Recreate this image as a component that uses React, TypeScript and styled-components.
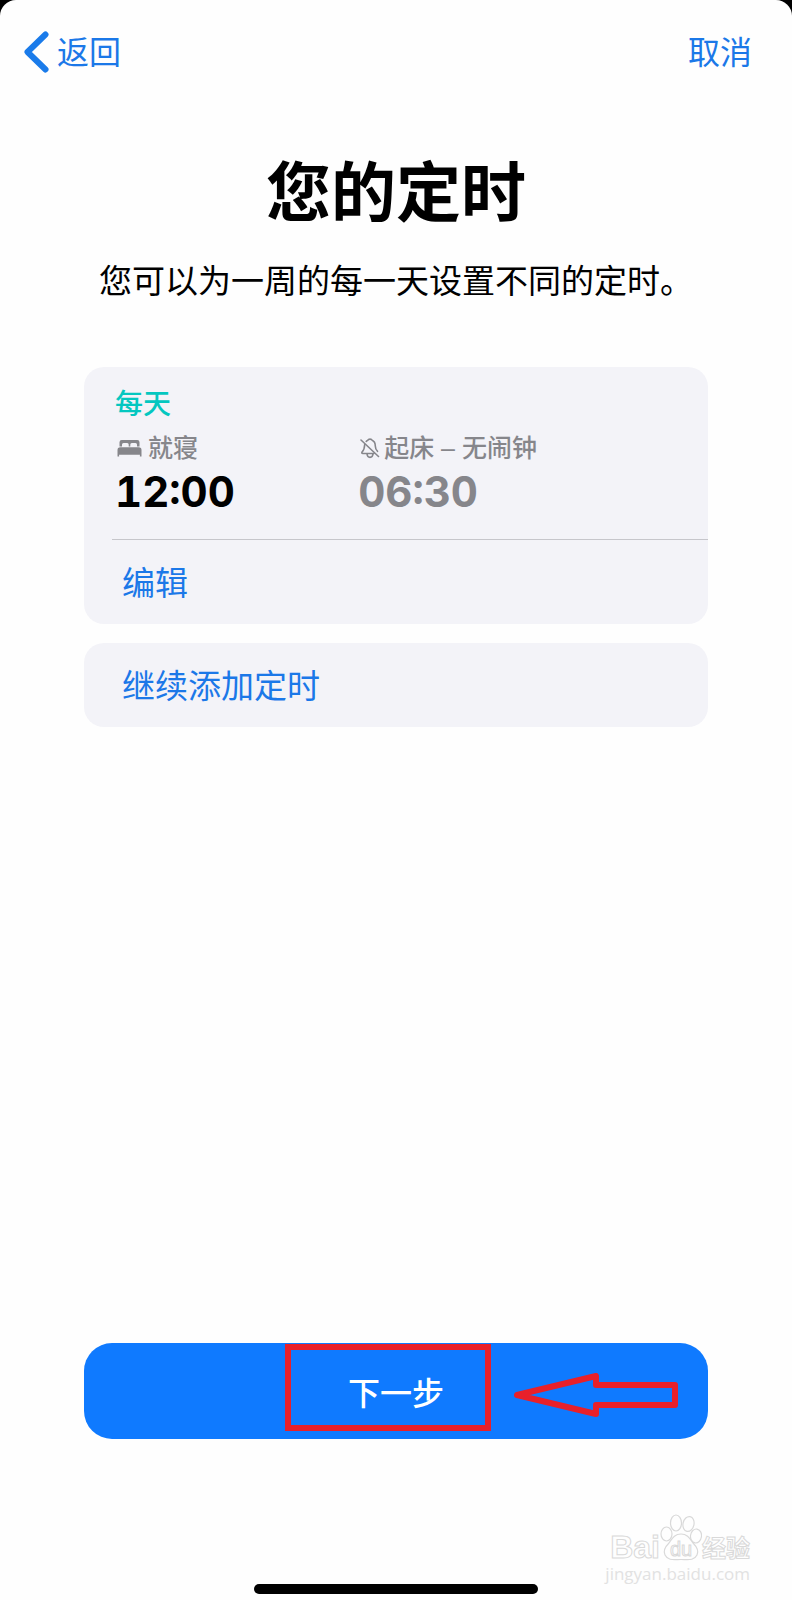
import React from 'react';
import styled, { createGlobalStyle } from 'styled-components';

const GlobalStyle = createGlobalStyle`
  *, *::before, *::after { box-sizing: border-box; }
  body {
    margin: 0;
    background: #000;
    font-family: "Liberation Sans", "Noto Sans CJK SC", sans-serif;
    color: #000;
  }
  button {
    font: inherit;
    border: 0;
    padding: 0;
    background: none;
    cursor: pointer;
  }
`;

const LINK = '#1b78e8';
const CARD = '#f3f3f8';
const MUTED = '#86868b';
const MARK = '#e8202a';

const Page = styled.div`
  position: relative;
  min-height: 100vh;
  display: flex;
  flex-direction: column;
  background: #fefefe;
  border-radius: 16px 16px 0 0;
`;

const NavBar = styled.nav`
  display: flex;
  align-items: center;
  justify-content: space-between;
  height: 104px;
  padding: 0 40px 0 24px;
`;

const NavButton = styled.button`
  display: flex;
  align-items: center;
  gap: 8px;
  font-size: 32px;
  line-height: 40px;
  color: ${LINK};
`;

const NavText = styled.span`
  padding-top: 2px;
`;

const Heading = styled.header`
  padding: 42px 24px 0;
  text-align: center;
`;

const Title = styled.h1`
  margin: 0;
  font-size: 65px;
  line-height: 96px;
  font-weight: 700;
`;

const Subtitle = styled.p`
  margin: 0;
  padding: 16px 0;
  font-size: 33px;
  line-height: 48px;
`;

const Schedules = styled.main`
  display: flex;
  flex-direction: column;
  gap: 19px;
  padding: 45px 84px 40px;
`;

const Card = styled.section`
  border-radius: 20px;
  background: ${CARD};
  overflow: hidden;
`;

const Summary = styled.div`
  margin-left: 28px;
  padding: 18px 0 26px 3px;
  border-bottom: 1px solid #c6c6cb;
`;

const Days = styled.h2`
  margin: 0;
  font-size: 28px;
  line-height: 40px;
  font-weight: 500;
  color: #04c7c0;
`;

const Times = styled.div`
  display: grid;
  grid-template-columns: 41% 1fr;
`;

const TimeLabel = styled.div<{ $gap: number }>`
  display: flex;
  align-items: center;
  gap: ${(p) => p.$gap}px;
  padding-left: 2px;
  font-size: 25px;
  line-height: 46px;
  font-weight: 500;
  color: ${MUTED};
`;

const TimeValue = styled.div<{ $muted?: boolean }>`
  font-family: Inter, "Liberation Sans", sans-serif;
  font-size: 42px;
  line-height: 42px;
  font-weight: 650;
  font-variant-numeric: tabular-nums;
  color: ${(p) => (p.$muted ? MUTED : '#000')};
`;

const RowButton = styled.button`
  display: block;
  width: 100%;
  padding: 4px 38px 0;
  text-align: left;
  font-size: 33px;
  line-height: 80px;
  color: ${LINK};
`;

const Footer = styled.footer`
  margin-top: auto;
  padding: 0 84px 6px;
  display: flex;
  flex-direction: column;
  align-items: center;
`;

const NextArea = styled.div`
  position: relative;
  width: 100%;
`;

const NextButton = styled.button`
  display: block;
  width: 100%;
  height: 96px;
  border-radius: 28px;
  background: #0f7aff;
  color: #fff;
  font-size: 32px;
  font-weight: 500;
`;

const Highlight = styled.div`
  position: absolute;
  top: 1px;
  bottom: 8px;
  left: 201px;
  right: 217px;
  border: 6px solid ${MARK};
  pointer-events: none;
`;

const Arrow = styled.svg`
  position: absolute;
  top: 28px;
  right: 28px;
  pointer-events: none;
`;

const HomeIndicator = styled.div`
  width: 284px;
  height: 10px;
  margin-top: 145px;
  border-radius: 5px;
  background: #000;
`;

const Watermark = styled.div`
  position: absolute;
  right: 42px;
  bottom: 14px;
  display: flex;
  flex-direction: column;
  align-items: flex-end;
  color: #fefefe;
  pointer-events: none;
`;

const Brand = styled.div`
  display: flex;
  align-items: flex-end;
  font-size: 32px;
  line-height: 30px;
  font-weight: 700;
  -webkit-text-stroke: 1px #d9d9d9;
`;

const BrandSuffix = styled.span`
  font-size: 24px;
  line-height: 26px;
`;

const Site = styled.div`
  font-family: "Open Sans", sans-serif;
  font-size: 17px;
  line-height: 24px;
  color: #e2e2e2;
`;

const BackIcon = () => (
  <svg width="25" height="42" viewBox="0 0 25 42" fill="none" aria-hidden="true">
    <path d="M21.500 3.500 3.500 21l18 17.500" stroke="#1a7bea" strokeWidth="6" strokeLinecap="round" strokeLinejoin="round" />
  </svg>
);

const BedIcon = () => (
  <svg width="25" height="18" viewBox="0 0 25 18" fill={MUTED} aria-hidden="true">
    <path d="M2.500 7.500V3.200Q2.500 1 4.700 1H20.300Q22.500 1 22.500 3.200V7.500H20V5.500Q20 4 18.500 4H14.800Q13.300 4 13.300 5.500V7.500H11.700V5.500Q11.700 4 10.200 4H6.500Q5 4 5 5.500V7.500Z" />
    <path d="M.5 17.500V11Q.5 8.300 3.200 8.300H21.800Q24.500 8.300 24.500 11V17.500H22.900V15.800H2.100V17.500Z" />
  </svg>
);

const BellSlashIcon = () => (
  <svg width="20" height="21" viewBox="0 0 20 21" fill="none" stroke={MUTED} strokeWidth="1.600" strokeLinecap="round" strokeLinejoin="round" aria-hidden="true">
    <path d="M1 2 18.500 18.500" />
    <path d="M6.200 3.500C7 2.600 7.500 2.600 8 2.200 8.300.8 11.700.8 12 2.200 14.600 3.200 15.300 5.300 15.300 8c0 2.600.8 3.800 2.200 5.300" />
    <path d="M4.700 6.500C4.500 10 4.400 11.600 2.400 13.600c-1 1-.7 1.900.5 1.900H14" />
    <path d="M7 15.800C7.300 20.500 12.700 20.500 13 15.800" />
  </svg>
);

const PawIcon = () => (
  <svg width="42" height="48" viewBox="0 0 42 48" fill="#fefefe" stroke="#d9d9d9" strokeWidth="1.200" aria-hidden="true">
    <ellipse cx="6.500" cy="20" rx="5.500" ry="7" />
    <ellipse cx="16" cy="9" rx="5.500" ry="8" />
    <ellipse cx="28.500" cy="10" rx="5.500" ry="7.500" transform="rotate(12 28.500 10)" />
    <ellipse cx="36" cy="22" rx="5.500" ry="7" transform="rotate(8 36 22)" />
    <path d="M21 20c7 0 9 5 12 9 4 4 6 8 4 12-3 6-9 4.500-16 4.500S8 47 5 41c-2-4 0-8 4-12 3-4 5-9 12-9Z" />
    <text x="21" y="42" textAnchor="middle" fontFamily="Liberation Sans, sans-serif" fontSize="20" fontWeight="400" strokeWidth="1">du</text>
  </svg>
);

export default function App() {
  return (
    <>
      <GlobalStyle />
      <Page>
        <NavBar>
          <NavButton type="button">
            <BackIcon />
            <NavText>返回</NavText>
          </NavButton>
          <NavButton type="button">
            <NavText>取消</NavText>
          </NavButton>
        </NavBar>

        <Heading>
          <Title>您的定时</Title>
          <Subtitle>您可以为一周的每一天设置不同的定时。</Subtitle>
        </Heading>

        <Schedules>
          <Card>
            <Summary>
              <Days>每天</Days>
              <Times>
                <div>
                  <TimeLabel $gap={6}>
                    <BedIcon />
                    就寝
                  </TimeLabel>
                  <TimeValue>12:00</TimeValue>
                </div>
                <div>
                  <TimeLabel $gap={4}>
                    <BellSlashIcon />
                    起床 – 无闹钟
                  </TimeLabel>
                  <TimeValue $muted>06:30</TimeValue>
                </div>
              </Times>
            </Summary>
            <RowButton type="button">编辑</RowButton>
          </Card>
          <Card>
            <RowButton type="button">继续添加定时</RowButton>
          </Card>
        </Schedules>

        <Footer>
          <NextArea>
            <NextButton type="button">下一步</NextButton>
            <Highlight />
            <Arrow width="168" height="46" viewBox="0 0 168 46" fill="none" stroke={MARK} strokeWidth="6" strokeLinejoin="round" aria-hidden="true">
              <path d="M5 24 84 5V14H163V34H84V43Z" />
            </Arrow>
          </NextArea>
          <HomeIndicator />
        </Footer>

        <Watermark>
          <Brand>
            Bai
            <PawIcon />
            <BrandSuffix>经验</BrandSuffix>
          </Brand>
          <Site>jingyan.baidu.com</Site>
        </Watermark>
      </Page>
    </>
  );
}
